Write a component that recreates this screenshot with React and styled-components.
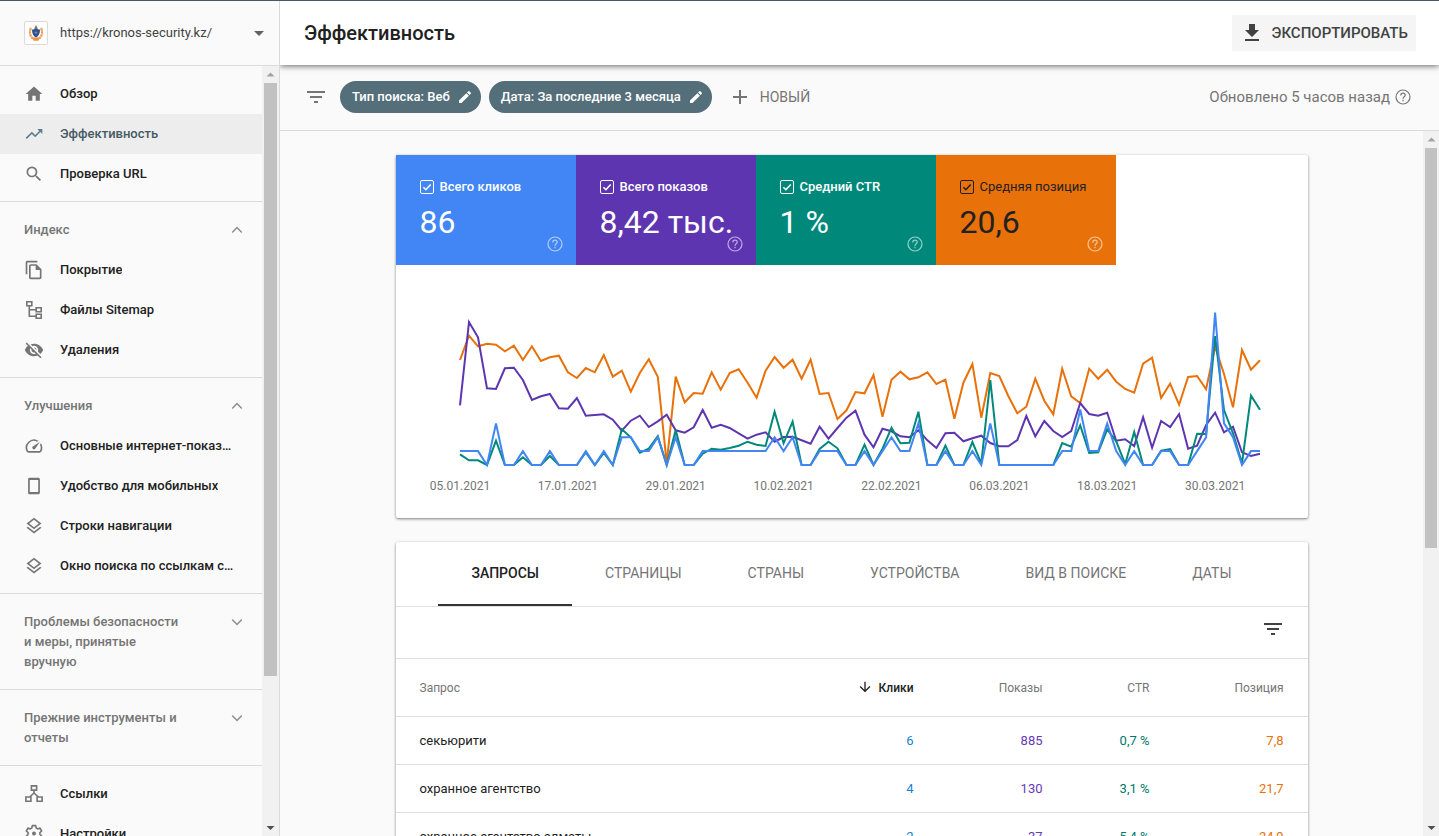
import React from "react";
import styled, { createGlobalStyle, css } from "styled-components";
import {
  MdAdd,
  MdArrowDownward,
  MdArrowDropDown,
  MdEdit,
  MdFileDownload,
  MdFilterList,
  MdHome,
  MdOutlineFileCopy,
  MdOutlineLayers,
  MdSearch,
  MdSpeed,
  MdTrendingUp,
  MdVisibilityOff,
} from "react-icons/md";

const SitemapIcon = () => (
  <svg width="20" height="20" viewBox="0 0 20 20" fill="none" stroke="currentColor" strokeWidth="1.6">
    <path d="M2.8 1.8h5v4h-5zM12.2 7.8h5v4h-5zM12.2 14.2h5v4h-5zM5.3 5.8v10.4h6.9M5.3 9.8h6.9" />
  </svg>
);

const PhoneIcon = () => (
  <svg width="20" height="20" viewBox="0 0 20 20" fill="currentColor">
    <path
      fillRule="evenodd"
      d="M5.6 1.7h8.8c.9 0 1.5.6 1.5 1.5v13.6c0 .9-.6 1.5-1.5 1.5H5.6c-.9 0-1.5-.6-1.5-1.5V3.2c0-.9.6-1.5 1.5-1.5zM5.8 4v12h8.4V4z"
    />
  </svg>
);

const LinksIcon = () => (
  <svg width="20" height="20" viewBox="0 0 20 20" fill="none" stroke="currentColor" strokeWidth="1.6">
    <path d="M7.4 1.9h5.2v4.2H7.4zM1.9 13h5v4.2h-5zM13.1 13h5v4.2h-5zM10 6.1v3.6M10 9l-4.4 4M10 9l4.4 4" />
  </svg>
);

const GearIcon = () => (
  <svg width="20" height="20" viewBox="0 0 20 20" fill="none" stroke="currentColor" strokeWidth="1.6">
    <path
      strokeLinejoin="round"
      d="M8.3 1.6h3.4l.5 2.4 1.5.9 2.3-.8 1.7 2.9-1.8 1.6v1.8l1.8 1.6-1.7 2.9-2.3-.8-1.5.9-.5 2.4H8.3L7.8 15l-1.500-.9-2.3.8L2.300 12l1.800-1.600V8.600L2.300 7 4 4.100l2.300.8L7.800 4z"
    />
    <circle cx="10" cy="9.500" r="2" fill="currentColor" stroke="none" />
  </svg>
);

const HelpIcon = () => (
  <svg width="18" height="18" viewBox="0 0 18 18" fill="none" stroke="currentColor" strokeWidth="1.2">
    <circle cx="9" cy="9" r="7" />
    <path d="M6.8 7.400c0-1.300.9-2.200 2.200-2.200s2.200.8 2.200 2c0 1.600-2.200 1.700-2.200 3.500M9 11.800v1.400" />
  </svg>
);

const Chevron = ({ up }) => (
  <svg width="12" height="8" viewBox="0 0 12 8" fill="none" stroke="#8a8a8a" strokeWidth="1.4">
    <path d={up ? "M1.2 6.4 6 1.6l4.8 4.8" : "M1.2 1.6 6 6.4l4.8-4.8"} />
  </svg>
);

const SiteLogo = () => (
  <svg width="14" height="16" viewBox="0 0 14 16">
    <path
      d="M2 3.2C0 6.800.6 11 4 13.400M12 3.200c2 3.600 1.400 7.800-2 10.200"
      fill="none"
      stroke="#eda25c"
      strokeWidth="2.400"
      strokeDasharray="2.600 .5"
    />
    <path d="M3.400 12.400h7.200L9.400 15.800H4.600z" fill="#ee9340" />
    <path d="M7 0l2 3.800H5z" fill="#8a7758" />
    <path d="M7 3.200c1.200 1 2.400 1.200 4 1.200 0 4-1.200 6.600-4 8.200-2.800-1.600-4-4.200-4-8.200 1.600 0 2.800-.2 4-1.200z" fill="#31508f" />
    <circle cx="7" cy="7.600" r="1.200" fill="#7089ba" />
  </svg>
);

const sections = [
  {
    items: [
      { icon: MdHome, text: "Обзор" },
      { icon: MdTrendingUp, text: "Эффективность", active: true },
      { icon: MdSearch, text: "Проверка URL" },
    ],
  },
  {
    title: "Индекс",
    open: true,
    items: [
      { icon: MdOutlineFileCopy, text: "Покрытие" },
      { icon: SitemapIcon, text: "Файлы Sitemap" },
      { icon: MdVisibilityOff, text: "Удаления" },
    ],
  },
  {
    title: "Улучшения",
    open: true,
    items: [
      { icon: MdSpeed, text: "Основные интернет-показатели" },
      { icon: PhoneIcon, text: "Удобство для мобильных" },
      { icon: MdOutlineLayers, text: "Строки навигации" },
      { icon: MdOutlineLayers, text: "Окно поиска по ссылкам сайта" },
    ],
  },
  { title: "Проблемы безопасности и меры, принятые вручную", items: [] },
  { title: "Прежние инструменты и отчеты", items: [] },
  {
    items: [
      { icon: LinksIcon, text: "Ссылки" },
      { icon: GearIcon, text: "Настройки" },
    ],
  },
];

const metrics = [
  { label: "Всего кликов", value: "86", color: "#4285f4" },
  { label: "Всего показов", value: "8,42 тыс.", color: "#5e35b1" },
  { label: "Средний CTR", value: "1 %", color: "#00897b" },
  { label: "Средняя позиция", value: "20,6", color: "#e8710a", dark: true },
];

const tabs = ["Запросы", "Страницы", "Страны", "Устройства", "Вид в поиске", "Даты"];

const rows = [
  { query: "секьюрити", clicks: "6", shows: "885", ctr: "0,7 %", position: "7,8" },
  { query: "охранное агентство", clicks: "4", shows: "130", ctr: "3,1 %", position: "21,7" },
  { query: "охранное агентство алматы", clicks: "2", shows: "37", ctr: "5,4 %", position: "24,9" },
];

// one value per day, 05.01.2021 - 04.04.2021
const clicks = [
  1, 1, 1, 0, 3, 0, 0, 1, 0, 0, 1, 0, 0, 0, 1, 0, 1, 0, 2, 2, 1, 1, 2, 0, 2, 0, 0, 1, 1, 1,
  1, 1, 1, 1, 1, 2, 1, 2, 0, 0, 1, 1, 1, 0, 0, 1, 0, 1, 2, 1, 1, 3, 0, 0, 1, 0, 0, 1, 0, 3,
  0, 0, 0, 0, 0, 0, 0, 1, 1, 4, 1, 1, 3, 1, 0, 1, 0, 0, 1, 1, 0, 0, 1, 2, 11, 3, 2, 0, 1, 1,
];

// the other series are kept as depth below the top of the plot, 495 is the base line
const position = [
  180, 107, 139, 131, 134, 154, 137, 180, 139, 183, 172, 167, 217, 234, 204, 217, 165, 230,
  212, 275, 219, 178, 230, 490, 230, 307, 279, 281, 217, 269, 219, 208, 248, 293, 212, 171,
  203, 179, 236, 179, 282, 279, 357, 331, 276, 280, 225, 350, 239, 215, 238, 232, 217, 252,
  239, 356, 248, 192, 353, 219, 228, 288, 340, 320, 236, 302, 343, 206, 289, 309, 206, 236,
  209, 245, 267, 278, 191, 173, 294, 251, 314, 231, 228, 268, 140, 222, 322, 150, 209, 181,
];

const shows = [
  316, 66, 112, 265, 267, 205, 203, 240, 300, 289, 282, 325, 326, 294, 347, 345, 343, 359,
  392, 362, 347, 381, 364, 344, 391, 398, 382, 330, 383, 374, 384, 400, 416, 404, 397, 425,
  411, 410, 421, 431, 380, 416, 384, 353, 332, 404, 442, 386, 394, 409, 412, 391, 421, 444,
  400, 398, 424, 415, 407, 429, 439, 439, 420, 348, 409, 363, 393, 411, 393, 309, 342, 347,
  338, 422, 418, 438, 352, 443, 363, 381, 342, 446, 437, 375, 338, 397, 380, 457, 468, 461,
];

const ctr = [
  463, 481, 481, 495, 422, 495, 495, 472, 495, 495, 468, 495, 495, 495, 457, 495, 459, 495,
  388, 412, 458, 446, 409, 495, 390, 495, 495, 461, 446, 449, 444, 437, 425, 434, 438, 335,
  430, 365, 495, 495, 447, 425, 445, 495, 495, 434, 495, 446, 383, 430, 428, 335, 495, 495,
  437, 495, 495, 426, 490, 240, 495, 495, 495, 495, 495, 495, 495, 429, 440, 376, 459, 457,
  388, 424, 492, 396, 495, 495, 452, 447, 495, 495, 401, 402, 108, 330, 400, 490, 287, 329,
];

const dates = [
  "05.01.2021",
  "17.01.2021",
  "29.01.2021",
  "10.02.2021",
  "22.02.2021",
  "06.03.2021",
  "18.03.2021",
  "30.03.2021",
];

const dayX = (day) => 64 + (day * 800) / 89;
const toPoints = (values) =>
  values.map((value, day) => `${dayX(day).toFixed(1)},${(35 + value / 3).toFixed(1)}`).join(" ");

const lines = [
  { color: "#e8710a", points: toPoints(position) },
  { color: "#5e35b1", points: toPoints(shows) },
  { color: "#00897b", points: toPoints(ctr) },
  { color: "#4285f4", points: toPoints(clicks.map((count) => 495 - count * 41.6)) },
];

const Chart = () => (
  <ChartSvg viewBox="0 0 912 253" role="img" aria-label="График эффективности">
    {lines.map((line) => (
      <polyline key={line.color} points={line.points} fill="none" stroke={line.color} strokeWidth="2" />
    ))}
    {dates.map((date, index) => (
      <text key={date} x={dayX(index * 12)} y="225" textAnchor="middle">
        {date}
      </text>
    ))}
  </ChartSvg>
);

const ScrollBar = ({ width, share }) => (
  <Track $width={width} aria-hidden="true">
    <Arrow viewBox="0 0 17 17">
      <path d="M4.5 10.5h8l-4-4z" fill="#a3a3a3" />
    </Arrow>
    <Lane>
      <Thumb $share={share} />
    </Lane>
    <Arrow viewBox="0 0 17 17">
      <path d="M4.5 7h8l-4 4z" fill="#505050" />
    </Arrow>
  </Track>
);

const Sidebar = () => (
  <Aside>
    <Property type="button">
      <LogoBox>
        <SiteLogo />
      </LogoBox>
      <PropertyName>https://kronos-security.kz/</PropertyName>
      <MdArrowDropDown size={24} />
    </Property>
    <SideBody>
      <SideNav>
        {sections.map((section, index) => (
          <Section key={index}>
            {section.title && (
              <SectionTitle type="button" aria-expanded={Boolean(section.open)}>
                <span>{section.title}</span>
                <ChevronBox>
                  <Chevron up={section.open} />
                </ChevronBox>
              </SectionTitle>
            )}
            {section.items.map(({ icon: Icon, text, active }) => (
              <NavItem key={text} href="#" $active={active}>
                <Icon size={20} />
                <NavText>{text}</NavText>
              </NavItem>
            ))}
          </Section>
        ))}
      </SideNav>
      <ScrollBar width={17} share={80.6} />
    </SideBody>
  </Aside>
);

const App = () => {
  return (
    <>
      <GlobalStyle />
      <Page>
        <Sidebar />
        <Main>
          <Header>
            <Title>Эффективность</Title>
            <ExportBtn type="button">
              <MdFileDownload size={24} />
              Экспортировать
            </ExportBtn>
          </Header>
          <FilterBar>
            <MdFilterList size={24} />
            <Chips>
              <Chip type="button">
                Тип поиска: Веб
                <MdEdit size={16} />
              </Chip>
              <Chip type="button">
                Дата: За последние 3 месяца
                <MdEdit size={16} />
              </Chip>
            </Chips>
            <NewBtn type="button">
              <MdAdd size={24} />
              Новый
            </NewBtn>
            <Updated>
              Обновлено 5 часов назад
              <HelpIcon />
            </Updated>
          </FilterBar>
          <Body>
            <Scroller>
              <Content>
                <Card>
                  <Metrics>
                    {metrics.map((metric) => (
                      <Metric key={metric.label} $color={metric.color} $dark={metric.dark}>
                        <MetricLabel>
                          <CheckWrap>
                            <CheckInput type="checkbox" defaultChecked />
                            <svg width="14" height="14" viewBox="0 0 14 14" fill="none" stroke="currentColor" strokeWidth="1.6">
                              <path d="M3.4 7.2l2.5 2.5 4.8-5.2" />
                            </svg>
                          </CheckWrap>
                          {metric.label}
                        </MetricLabel>
                        <MetricValue>{metric.value}</MetricValue>
                        <MetricHelp type="button" aria-label="Справка">
                          <HelpIcon />
                        </MetricHelp>
                      </Metric>
                    ))}
                  </Metrics>
                  <Chart />
                </Card>
                <Card>
                  <Tabs role="tablist">
                    {tabs.map((tab, index) => (
                      <Tab key={tab} type="button" role="tab" aria-selected={index === 0} $active={index === 0}>
                        {tab}
                      </Tab>
                    ))}
                  </Tabs>
                  <TableTools>
                    <IconBtn type="button" aria-label="Фильтр">
                      <MdFilterList size={24} />
                    </IconBtn>
                  </TableTools>
                  <Table>
                    <colgroup>
                      <col />
                      <Col $width={120} />
                      <Col $width={129} />
                      <Col $width={107} />
                      <Col $width={158} />
                    </colgroup>
                    <thead>
                      <tr>
                        <th>Запрос</th>
                        <SortedTh>
                          <MdArrowDownward size={16} />
                          Клики
                        </SortedTh>
                        <th>Показы</th>
                        <th>CTR</th>
                        <th>Позиция</th>
                      </tr>
                    </thead>
                    <tbody>
                      {rows.map((row) => (
                        <tr key={row.query}>
                          <td>{row.query}</td>
                          <Cell $color="#1a82d2">{row.clicks}</Cell>
                          <Cell $color="#673ab7">{row.shows}</Cell>
                          <Cell $color="#00796b">{row.ctr}</Cell>
                          <Cell $color="#e8710a">{row.position}</Cell>
                        </tr>
                      ))}
                    </tbody>
                  </Table>
                </Card>
              </Content>
            </Scroller>
            <ScrollBar width={16} share={59.6} />
          </Body>
        </Main>
      </Page>
    </>
  );
};

export default App;

const GlobalStyle = createGlobalStyle`
  * {
    box-sizing: border-box;
  }

  body {
    margin: 0;
    background: #fafafa;
    color: #212121;
    font-family: Roboto, "Liberation Sans", sans-serif;
    font-size: 13px;
    line-height: 20px;
  }

  button {
    border: none;
    padding: 0;
    background: none;
    color: inherit;
    font: inherit;
    cursor: pointer;
  }

  svg {
    flex-shrink: 0;
  }
`;

const Page = styled.div`
  display: flex;
  height: 100vh;
  border-top: 1px solid #455a64;
  overflow: hidden;
`;

const Aside = styled.aside`
  display: flex;
  flex-direction: column;
  flex-shrink: 0;
  width: 280px;
  border-right: 1px solid #dadada;
`;

const Property = styled.button`
  display: flex;
  align-items: center;
  gap: 12px;
  height: 65px;
  flex-shrink: 0;
  padding: 0 8px 0 24px;
  border-bottom: 1px solid #dadada;
  color: #616161;
  text-align: left;
`;

const LogoBox = styled.span`
  display: flex;
  align-items: center;
  justify-content: center;
  width: 24px;
  height: 24px;
  border: 1px solid #dadada;
  border-radius: 2px;
  background: #fff;
`;

const PropertyName = styled.span`
  flex: 1;
  color: #424242;
`;

const SideBody = styled.div`
  display: flex;
  flex: 1;
  min-height: 0;
`;

const SideNav = styled.nav`
  flex: 1;
  min-width: 0;
  overflow-y: auto;
  scrollbar-width: none;
`;

const Section = styled.div`
  padding: 8px 0 7px;
  border-bottom: 1px solid #dadada;
`;

const SectionTitle = styled.button`
  display: flex;
  justify-content: space-between;
  width: 100%;
  padding: 10px 19px 10px 24px;
  color: #757575;
  font-weight: 500;
  text-align: left;

  span {
    max-width: 160px;
  }
`;

const ChevronBox = styled.i`
  display: flex;
  align-items: center;
  height: 20px;
`;

const NavItem = styled.a`
  display: flex;
  align-items: center;
  gap: 16px;
  height: 40px;
  padding: 0 24px;
  background: ${({ $active }) => ($active ? "#ededed" : "transparent")};
  color: #212121;
  font-weight: 500;
  text-decoration: none;

  svg {
    color: #757575;
  }

  ${({ $active }) =>
    $active &&
    css`
      color: #455a64;

      svg {
        color: #607d8b;
      }
    `}
`;

const NavText = styled.span`
  overflow: hidden;
  text-overflow: ellipsis;
  white-space: nowrap;
`;

const Track = styled.div`
  display: flex;
  flex-direction: column;
  flex-shrink: 0;
  width: ${({ $width }) => $width}px;
  background: #f1f1f1;
`;

const Arrow = styled.svg`
  width: 17px;
  height: 17px;
`;

const Lane = styled.div`
  flex: 1;
  padding: 0 2px;
`;

const Thumb = styled.div`
  height: ${({ $share }) => $share}%;
  background: #c1c1c1;
`;

const Main = styled.main`
  display: flex;
  flex-direction: column;
  flex: 1;
  min-width: 0;
  overflow: hidden;
`;

const Header = styled.header`
  display: flex;
  align-items: center;
  justify-content: space-between;
  flex-shrink: 0;
  height: 64px;
  padding: 0 23px 0 24px;
  background: #fff;
  box-shadow: 0 1px 6px rgba(0, 0, 0, 0.6);
  z-index: 1;
`;

const Title = styled.h1`
  margin: 0;
  font-size: 20px;
  font-weight: 500;
`;

const ExportBtn = styled.button`
  display: flex;
  align-items: center;
  gap: 8px;
  height: 36px;
  padding: 0 8px;
  border-radius: 2px;
  background: #f5f5f5;
  color: #424242;
  font-size: 15px;
  font-weight: 500;
  text-transform: uppercase;
`;

const FilterBar = styled.div`
  display: flex;
  align-items: center;
  flex-shrink: 0;
  height: 66px;
  padding: 0 27px 1px 24px;
  border-bottom: 1px solid #dadada;
  color: #757575;
`;

const Chips = styled.div`
  display: flex;
  gap: 8px;
  margin-left: 12px;
`;

const Chip = styled.button`
  display: flex;
  align-items: center;
  gap: 7px;
  height: 32px;
  padding: 0 8px 0 12px;
  border-radius: 16px;
  background: #546e7a;
  color: #fff;
  font-weight: 500;
`;

const NewBtn = styled.button`
  display: flex;
  align-items: center;
  gap: 8px;
  margin-left: 16px;
  font-size: 14px;
  text-transform: uppercase;
`;

const Updated = styled.span`
  display: flex;
  align-items: center;
  gap: 4px;
  margin-left: auto;
  font-size: 15px;
`;

const Body = styled.div`
  display: flex;
  flex: 1;
  min-height: 0;
`;

const Scroller = styled.div`
  flex: 1;
  min-width: 0;
  padding: 24px;
  overflow-y: auto;
  scrollbar-width: none;
`;

const Content = styled.div`
  display: flex;
  flex-direction: column;
  gap: 24px;
  max-width: 912px;
  margin: 0 auto;
`;

const Card = styled.section`
  border-radius: 2px;
  background: #fff;
  box-shadow: 0 1px 3px rgba(0, 0, 0, 0.5);
`;

const Metrics = styled.div`
  display: flex;
`;

const Metric = styled.div`
  position: relative;
  width: 180px;
  height: 110px;
  padding: 24px 0 0 24px;
  background: ${({ $color }) => $color};
  color: ${({ $dark }) => ($dark ? "#212121" : "#fff")};
  font-weight: ${({ $dark }) => ($dark ? 400 : 500)};
`;

const MetricLabel = styled.label`
  display: flex;
  align-items: center;
  gap: 6px;
  height: 16px;
  white-space: nowrap;
`;

const CheckWrap = styled.span`
  display: grid;

  > * {
    grid-area: 1 / 1;
  }
`;

const CheckInput = styled.input`
  appearance: none;
  width: 14px;
  height: 14px;
  margin: 0;
  border: 1px solid currentColor;
  border-radius: 2px;
  color: inherit;
`;

const MetricValue = styled.div`
  margin-top: 8px;
  font-size: 32px;
  font-weight: 400;
  line-height: 38px;
  white-space: nowrap;
`;

const MetricHelp = styled.button`
  position: absolute;
  right: 12px;
  bottom: 12px;
  display: flex;
  color: rgba(255, 255, 255, 0.6);
`;

const ChartSvg = styled.svg`
  display: block;
  width: 100%;

  text {
    fill: #757575;
    font-size: 12px;
  }
`;

const Tabs = styled.div`
  display: flex;
  justify-content: center;
  height: 65px;
  border-bottom: 1px solid #e0e0e0;
`;

const Tab = styled.button`
  padding: 0 33px;
  border-bottom: 2px solid ${({ $active }) => ($active ? "#333" : "transparent")};
  color: ${({ $active }) => ($active ? "#212121" : "#757575")};
  font-size: 14px;
  font-weight: ${({ $active }) => ($active ? 500 : 400)};
  text-transform: uppercase;
`;

const TableTools = styled.div`
  display: flex;
  justify-content: flex-end;
  height: 52px;
  padding: 10px 23px;
  border-bottom: 1px solid #e0e0e0;
`;

const IconBtn = styled.button`
  display: flex;
  height: 24px;
  color: #424242;
`;

const Table = styled.table`
  width: 100%;
  border-collapse: separate;
  border-spacing: 0;
  table-layout: fixed;

  th,
  td {
    height: 48px;
    padding: 0;
    border-bottom: 1px solid #e0e0e0;
    text-align: right;
  }

  th {
    height: 58px;
    color: #757575;
    font-size: 12px;
    font-weight: 400;
  }

  th:first-child,
  td:first-child {
    padding-left: 24px;
    text-align: left;
  }

  th:last-child,
  td:last-child {
    padding-right: 24px;
  }
`;

const Col = styled.col`
  width: ${({ $width }) => $width}px;
`;

const SortedTh = styled.th`
  && {
    color: #212121;
    font-weight: 500;
  }

  svg {
    margin-right: 6px;
    vertical-align: text-bottom;
  }
`;

const Cell = styled.td`
  color: ${({ $color }) => $color};
`;
